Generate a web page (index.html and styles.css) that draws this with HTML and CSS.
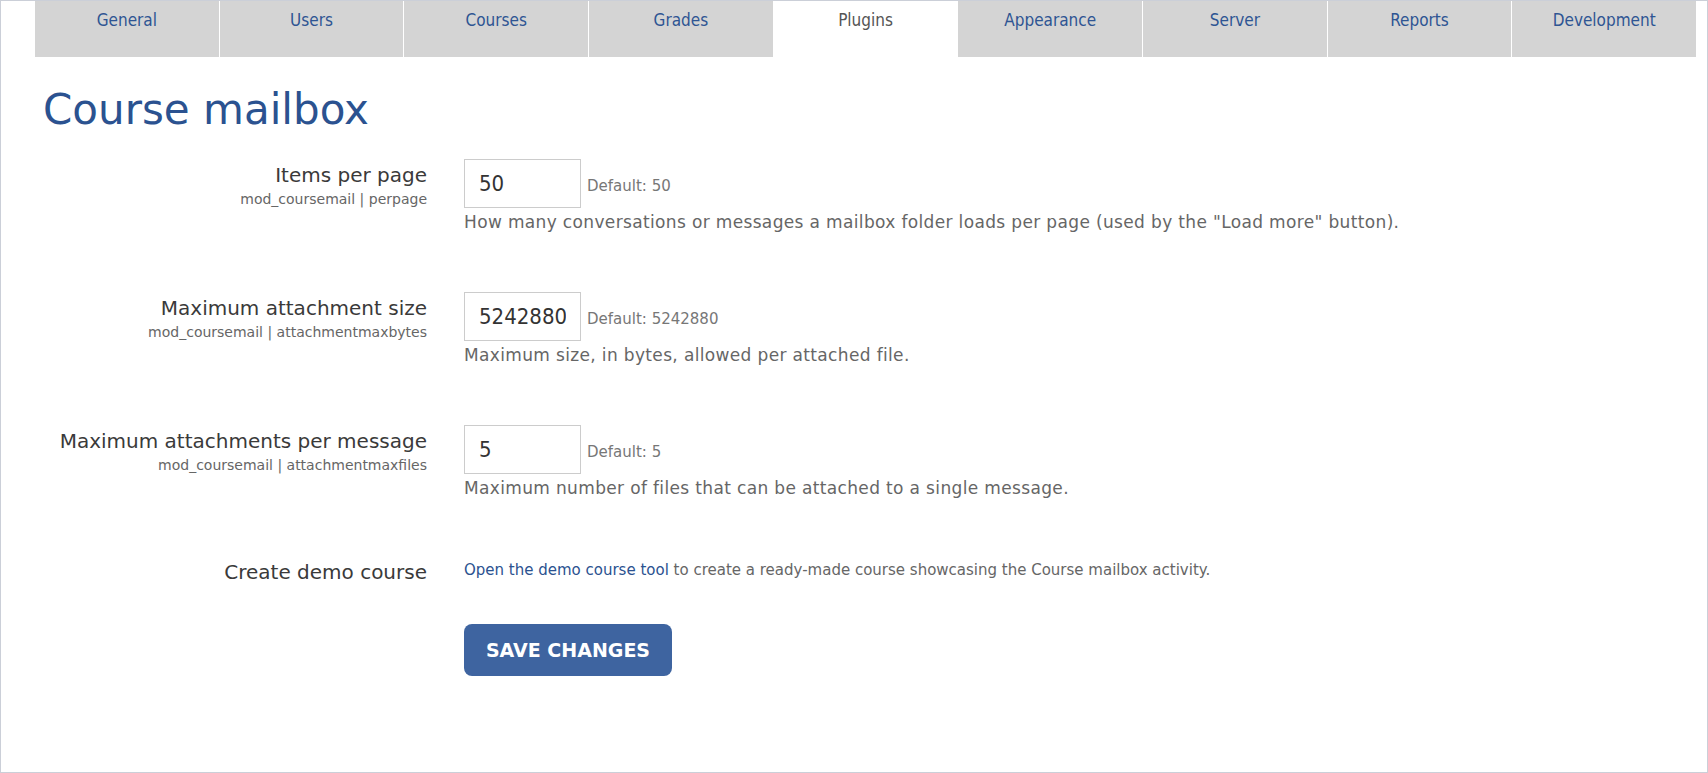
FILE: index.html
```html
<!DOCTYPE html>
<html lang="en">
<head>
  <meta charset="UTF-8">
  <meta name="viewport" content="width=device-width, initial-scale=1">
  <title>Course mailbox - Settings</title>
  <link rel="stylesheet" href="styles.css">
</head>
<body>

  <div class="frame">

    <!-- Admin tabs -->
    <nav class="tabs">
      <a href="#" class="tab">General</a>
      <a href="#" class="tab">Users</a>
      <a href="#" class="tab">Courses</a>
      <a href="#" class="tab">Grades</a>
      <a href="#" class="tab active">Plugins</a>
      <a href="#" class="tab">Appearance</a>
      <a href="#" class="tab">Server</a>
      <a href="#" class="tab">Reports</a>
      <a href="#" class="tab">Development</a>
    </nav>

    <!-- Settings -->
    <main class="content">
      <h1>Course mailbox</h1>

      <form class="settings">
        <div class="setting">
          <div class="label">
            <label for="perpage">Items per page</label>
            <span class="setting-name">mod_coursemail | perpage</span>
          </div>
          <div class="control">
            <div class="field">
              <input type="text" id="perpage" value="50">
              <span class="default">Default: 50</span>
            </div>
            <p class="desc">How many conversations or messages a mailbox folder loads per page (used by the "Load more" button).</p>
          </div>
        </div>

        <div class="setting">
          <div class="label">
            <label for="maxbytes">Maximum attachment size</label>
            <span class="setting-name">mod_coursemail | attachmentmaxbytes</span>
          </div>
          <div class="control">
            <div class="field">
              <input type="text" id="maxbytes" value="5242880">
              <span class="default">Default: 5242880</span>
            </div>
            <p class="desc">Maximum size, in bytes, allowed per attached file.</p>
          </div>
        </div>

        <div class="setting">
          <div class="label">
            <label for="maxfiles">Maximum attachments per message</label>
            <span class="setting-name">mod_coursemail | attachmentmaxfiles</span>
          </div>
          <div class="control">
            <div class="field">
              <input type="text" id="maxfiles" value="5">
              <span class="default">Default: 5</span>
            </div>
            <p class="desc">Maximum number of files that can be attached to a single message.</p>
          </div>
        </div>

        <div class="setting">
          <div class="label plain">
            <label>Create demo course</label>
          </div>
          <div class="control">
            <p class="demo"><a href="#">Open the demo course tool</a> to create a ready-made course showcasing the Course mailbox activity.</p>
          </div>
        </div>

        <div class="actions">
          <button type="button" class="save-btn">SAVE CHANGES</button>
        </div>
      </form>
    </main>

  </div>

</body>
</html>
```

FILE: styles.css
```css
/* RESET */
* {
  margin: 0;
  padding: 0;
  box-sizing: border-box;
  font-family: 'DejaVu Sans', Verdana, sans-serif;
}

body {
  background: #fff;
  color: #333;
  overflow: hidden;
}

.frame {
  height: 100vh;
  border: 1px solid #cbcfd8;
  background: #fff;
}

/* TABS */
.tabs {
  display: flex;
  gap: 1px;
  margin: 0 11px 0 34px;
}

.tab {
  flex: 1;
  height: 56px;
  padding-top: 9px;
  background: #d4d4d4;
  color: #2e5593;
  text-align: center;
  text-decoration: none;
  font-family: 'DejaVu Sans Condensed', 'DejaVu Sans', sans-serif;
  font-size: 17px;
  line-height: 20px;
}

.tab.active {
  background: #fff;
  color: #555;
}

/* CONTENT */
.content {
  padding-top: 28px;
}

.content h1 {
  margin-left: 42px;
  font-size: 42px;
  font-weight: normal;
  line-height: 50px;
  color: #2b5290;
  margin-bottom: 24px;
}

.setting {
  display: flex;
  gap: 37px;
  margin-bottom: 60px;
}

.label {
  width: 426px;
  flex-shrink: 0;
  text-align: right;
  padding-top: 4px;
}

.label.plain {
  padding-top: 2px;
}

.label label {
  display: block;
  font-size: 20px;
  line-height: 24px;
  color: #3a3a3a;
}

.setting-name {
  display: block;
  margin-top: 3px;
  font-size: 14px;
  line-height: 18px;
  color: #666;
}

.field {
  display: flex;
  align-items: baseline;
  gap: 6px;
}

.field input {
  width: 117px;
  height: 49px;
  padding: 0 14px;
  border: 1px solid #ccc;
  font-family: 'DejaVu Sans Condensed', 'DejaVu Sans', sans-serif;
  font-size: 22px;
  color: #333;
  outline: none;
}

.default {
  font-size: 15px;
  color: #777;
}

.desc {
  margin-top: 4px;
  font-size: 17px;
  line-height: 20px;
  letter-spacing: 0.35px;
  color: #666;
}

.demo {
  padding-top: 3px;
  font-size: 15px;
  line-height: 18px;
  color: #666;
}

.demo a {
  color: #2b5290;
  text-decoration: none;
}

/* BUTTON */
.actions {
  padding-left: 463px;
  margin-top: -20px;
}

.save-btn {
  width: 208px;
  height: 52px;
  background: #3e64a0;
  color: #fff;
  border: none;
  border-radius: 8px;
  font-size: 19px;
  font-weight: bold;
  cursor: pointer;
}
```
